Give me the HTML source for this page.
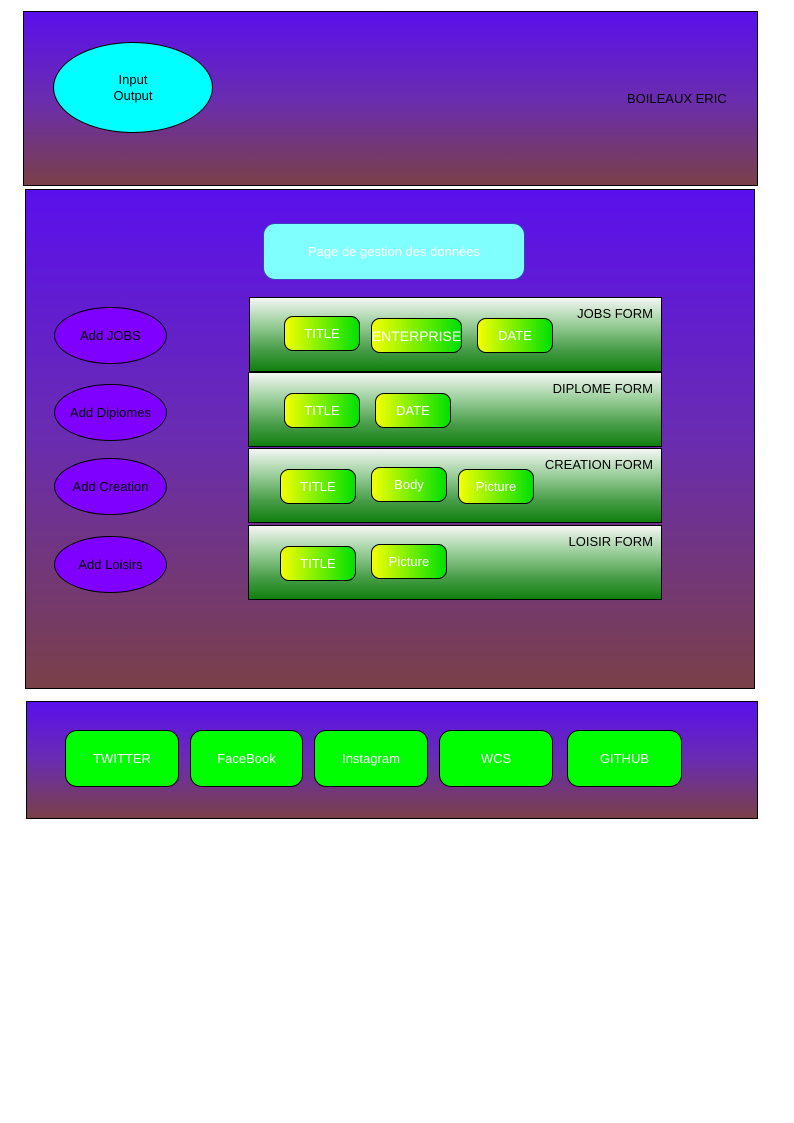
<!DOCTYPE html>
<html><head><meta charset="utf-8"><style>
body{margin:0;width:794px;height:1123px;background:#fff;position:relative;font-family:"Liberation Sans",sans-serif;font-size:13px;overflow:hidden}
.a{position:absolute;box-sizing:border-box}
.box{border:1px solid #000;background:linear-gradient(#5a10ec 0%,#6a2cb0 50%,#7a4048 100%)}
.ell{border:1px solid #000;border-radius:50%;display:flex;align-items:center;justify-content:center;text-align:center;color:#000}
.form{border:1px solid #000;background:linear-gradient(#f4f6f4 0%,#9ccf9c 35%,#4a9e4a 70%,#10800e 100%)}
.lbl{position:absolute;right:8px;top:8px;color:#000;font-size:13px}
.btn{border:1px solid #000;border-radius:9px;background:linear-gradient(90deg,#f4ff00,#00e000);color:#fff;display:flex;align-items:center;justify-content:center;font-size:13px}
.gb{border:1px solid #000;border-radius:12px;background:#00ff00;color:#fff;display:flex;align-items:center;justify-content:center}
</style></head><body>
<div class="a box" style="left:23px;top:11px;width:735px;height:175px"></div>
<div class="a ell" style="left:53px;top:42px;width:160px;height:91px;background:#00ffff;line-height:16px">Input<br>Output</div>
<div class="a" style="left:627px;top:91px;color:#000">BOILEAUX ERIC</div>

<div class="a box" style="left:25px;top:189px;width:730px;height:500px"></div>
<div class="a" style="left:263px;top:223px;width:262px;height:57px;border-radius:12px;background:#80ffff;border:1px solid #4040c0;color:#fff;display:flex;align-items:center;justify-content:center">Page de gestion des données</div>

<div class="a ell" style="left:54px;top:307px;width:113px;height:57px;background:#7f00ff">Add JOBS</div>
<div class="a ell" style="left:54px;top:384px;width:113px;height:57px;background:#7f00ff">Add Diplomes</div>
<div class="a ell" style="left:54px;top:458px;width:113px;height:57px;background:#7f00ff">Add Creation</div>
<div class="a ell" style="left:54px;top:536px;width:113px;height:57px;background:#7f00ff">Add Loisirs</div>

<div class="a form" style="left:249px;top:297px;width:413px;height:75px"><span class="lbl">JOBS FORM</span></div>
<div class="a btn" style="left:284px;top:316px;width:76px;height:35px">TITLE</div>
<div class="a btn" style="left:371px;top:318px;width:91px;height:35px;font-size:14px">ENTERPRISE</div>
<div class="a btn" style="left:477px;top:318px;width:76px;height:35px">DATE</div>

<div class="a form" style="left:248px;top:372px;width:414px;height:75px"><span class="lbl">DIPLOME FORM</span></div>
<div class="a btn" style="left:284px;top:393px;width:76px;height:35px">TITLE</div>
<div class="a btn" style="left:375px;top:393px;width:76px;height:35px">DATE</div>

<div class="a form" style="left:248px;top:448px;width:414px;height:75px"><span class="lbl">CREATION FORM</span></div>
<div class="a btn" style="left:280px;top:469px;width:76px;height:35px">TITLE</div>
<div class="a btn" style="left:371px;top:467px;width:76px;height:35px">Body</div>
<div class="a btn" style="left:458px;top:469px;width:76px;height:35px">Picture</div>

<div class="a form" style="left:248px;top:525px;width:414px;height:75px"><span class="lbl">LOISIR FORM</span></div>
<div class="a btn" style="left:280px;top:546px;width:76px;height:35px">TITLE</div>
<div class="a btn" style="left:371px;top:544px;width:76px;height:35px">Picture</div>

<div class="a box" style="left:26px;top:701px;width:732px;height:118px"></div>
<div class="a gb" style="left:65px;top:730px;width:114px;height:57px">TWITTER</div>
<div class="a gb" style="left:190px;top:730px;width:113px;height:57px">FaceBook</div>
<div class="a gb" style="left:314px;top:730px;width:114px;height:57px">Instagram</div>
<div class="a gb" style="left:439px;top:730px;width:114px;height:57px">WCS</div>
<div class="a gb" style="left:567px;top:730px;width:115px;height:57px">GITHUB</div>
</body></html>
